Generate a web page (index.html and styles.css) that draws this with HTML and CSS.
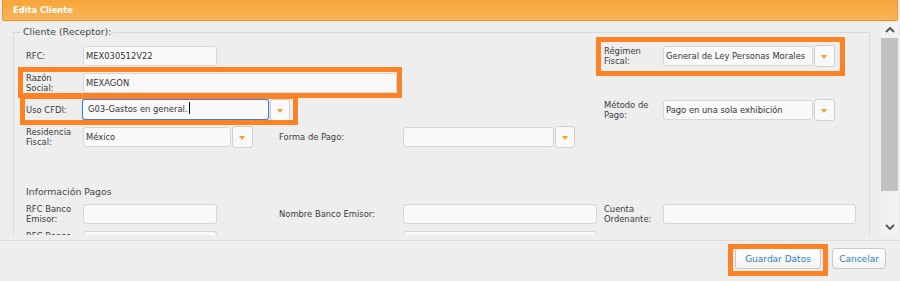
FILE: index.html
```html
<!DOCTYPE html>
<html lang="es">
<head>
  <meta charset="UTF-8">
  <meta name="viewport" content="width=device-width, initial-scale=1.0">
  <title>Edita Cliente</title>
  <link rel="stylesheet" href="styles.css">
</head>
<body>

<div class="dialog">
  <div class="dialog-title">Edita Cliente</div>

  <div class="dialog-body">
    <div class="scroll-area">
      <fieldset class="group">
        <legend>Cliente (Receptor):</legend>

        <div class="form-grid">
          <!-- fila 1 -->
          <label class="lbl c1">RFC:</label>
          <div class="field c2"><div class="input w-rfc">MEX030512V22</div></div>
          <label class="lbl c5">Régimen Fiscal:</label>
          <div class="field c6">
            <div class="combo">
              <div class="input w-regimen">General de Ley Personas Morales</div>
              <span class="drop"></span>
            </div>
          </div>

          <!-- fila 2 -->
          <label class="lbl c1">Razón Social:</label>
          <div class="field span-razon"><div class="input w-razon">MEXAGON</div></div>

          <!-- fila 3 -->
          <label class="lbl c1">Uso CFDI:</label>
          <div class="field c2">
            <div class="combo">
              <div class="input w-uso focus">G03-Gastos en general.<span class="caret"></span></div>
              <span class="drop small"></span>
            </div>
          </div>
          <label class="lbl c5">Método de Pago:</label>
          <div class="field c6">
            <div class="combo">
              <div class="input w-regimen">Pago en una sola exhibición</div>
              <span class="drop"></span>
            </div>
          </div>

          <!-- fila 4 -->
          <label class="lbl c1">Residencia Fiscal:</label>
          <div class="field c2">
            <div class="combo">
              <div class="input w-residencia">México</div>
              <span class="drop"></span>
            </div>
          </div>
          <label class="lbl c3">Forma de Pago:</label>
          <div class="field c4">
            <div class="combo">
              <div class="input w-forma"></div>
              <span class="drop small"></span>
            </div>
          </div>

          <h3 class="section-title">Información Pagos</h3>

          <!-- fila 5 -->
          <label class="lbl c1">RFC Banco Emisor:</label>
          <div class="field c2"><div class="input w-rfc"></div></div>
          <label class="lbl c3">Nombre Banco Emisor:</label>
          <div class="field c4"><div class="input w-banco"></div></div>
          <label class="lbl c5">Cuenta Ordenante:</label>
          <div class="field c6"><div class="input w-cuenta"></div></div>

          <!-- fila 6 -->
          <label class="lbl c1">RFC Banco Receptor:</label>
          <div class="field c2"><div class="input w-rfc"></div></div>
          <label class="lbl c3">Cuenta Beneficiario:</label>
          <div class="field c4"><div class="input w-banco"></div></div>
        </div>
      </fieldset>
    </div>

    <div class="scrollbar">
      <span class="sb-btn">
        <svg width="10" height="6" viewBox="0 0 10 6"><path d="M1 5 L5 1 L9 5" fill="none" stroke="#505050" stroke-width="1.8"/></svg>
      </span>
      <span class="sb-thumb"></span>
      <span class="sb-track"></span>
      <span class="sb-btn">
        <svg width="10" height="6" viewBox="0 0 10 6"><path d="M1 1 L5 5 L9 1" fill="none" stroke="#505050" stroke-width="1.8"/></svg>
      </span>
    </div>
  </div>

  <div class="dialog-footer">
    <button class="btn btn-save">Guardar Datos</button>
    <button class="btn btn-cancel">Cancelar</button>
  </div>

  <!-- marcas naranjas sobre los campos -->
  <span class="mark mark-regimen"></span>
  <span class="mark mark-razon"></span>
  <span class="mark mark-uso"></span>
  <span class="mark mark-guardar"></span>
</div>

</body>
</html>
```

FILE: styles.css
```css
/* Estilos generales */
body {
  margin: 0;
  background: #eeeeee;
  font-family: "DejaVu Sans", Verdana, sans-serif;
  font-size: 8.4px;
  color: #3a3a3a;
}

.dialog {
  position: relative;
  width: 900px;
  height: 281px;
  background: #eeeeee;
  overflow: hidden;
}

/* Barra de titulo */
.dialog-title {
  height: 20px;
  line-height: 20px;
  margin: 0 2px;
  padding-left: 10px;
  border: 1px solid #e9961f;
  border-top: none;
  border-radius: 0 0 2px 2px;
  background: linear-gradient(#f7a639, #f9b55a);
  color: #fff;
  font-weight: bold;
  font-size: 8.3px;
}

/* Cuerpo con desplazamiento */
.dialog-body {
  display: flex;
  height: 214px;
}

.scroll-area {
  width: 881px;
  overflow: hidden;
}

.group {
  margin: 5px 11px 0 13px;
  padding: 8px 13px 0 12px;
  border: 1px solid #d9d9d9;
  border-bottom: none;
  min-inline-size: 0;
}

.group legend {
  margin-left: -5px;
  padding: 0 2px;
  font-size: 9.4px;
  line-height: 12px;
  color: #444;
}

.form-grid {
  display: grid;
  grid-template-columns: 57px 196px 124px 201px 59px 193px;
  grid-template-rows: repeat(4, 20px) auto repeat(2, 20px);
  row-gap: 7px;
  align-items: center;
}

.lbl {
  line-height: 10px;
  padding-right: 3px;
}

.c1 { grid-column: 1; }
.c2 { grid-column: 2; }
.c3 { grid-column: 3; }
.c4 { grid-column: 4; }
.c5 { grid-column: 5; }
.c6 { grid-column: 6; }
.span-razon { grid-column: 2 / 5; }

.field {
  height: 20px;
}

.input {
  box-sizing: border-box;
  flex: none;
  height: 20px;
  padding: 0 2px;
  border: 1px solid #d6d6d6;
  border-radius: 3px;
  background: #f9f9f9;
  line-height: 18px;
  color: #333;
  white-space: nowrap;
  overflow: hidden;
}

.input.focus {
  height: 21px;
  margin-top: -1px;
  margin-left: -1px;
  padding-left: 5px;
  border: 1px solid #3b7fd9;
  box-shadow: 0 0 1px #3b7fd9;
  line-height: 19px;
}

.caret {
  display: inline-block;
  width: 0;
  height: 12px;
  margin-left: 1px;
  border-left: 1px solid #111;
  vertical-align: -2px;
}

.w-rfc { width: 134px; }
.w-razon { width: 314px; }
.w-regimen { width: 150px; }
.w-uso { width: 187px; }
.w-residencia { width: 148px; }
.w-forma { width: 151px; }
.w-banco { width: 194px; }
.w-cuenta { width: 193px; }

.combo {
  display: flex;
  gap: 1px;
}

.drop {
  box-sizing: border-box;
  flex: none;
  width: 21px;
  height: 22px;
  margin-top: -1px;
  border: 1px solid #d0d0d0;
  border-radius: 3px;
  background: #f9f9f9;
  position: relative;
}

.drop.small {
  width: 20px;
}

.drop::after {
  content: "";
  position: absolute;
  left: 50%;
  top: 9px;
  margin-left: -3.5px;
  border-left: 3.5px solid transparent;
  border-right: 3.5px solid transparent;
  border-top: 4px solid #f5a01e;
}

.section-title {
  grid-column: 1 / -1;
  margin: 32px 0 0;
  height: 11px;
  line-height: 11px;
  font-size: 9.3px;
  font-weight: normal;
  color: #444;
}

/* Barra de desplazamiento */
.scrollbar {
  display: flex;
  flex-direction: column;
  width: 17px;
  margin-top: 1px;
  background: #f1f1f1;
}

.sb-btn {
  display: flex;
  align-items: center;
  justify-content: center;
  height: 16px;
}

.sb-thumb {
  height: 153px;
  background: #c1c1c1;
}

.sb-track {
  flex: 1;
}

/* Pie */
.dialog-footer {
  display: flex;
  justify-content: flex-end;
  gap: 11px;
  margin-top: 5px;
  padding: 7px 14px 0 0;
  height: 33px;
  border-top: 1px solid #dcdcdc;
  border-bottom: 1px solid #dcdcdc;
}

.btn {
  height: 21px;
  border: 1px solid #c8c8c8;
  border-radius: 3px;
  background: linear-gradient(#ffffff, #f3f3f3);
  color: #2f82ba;
  font-family: "DejaVu Sans", Verdana, sans-serif;
  font-size: 9px;
  cursor: pointer;
}

.btn-save {
  width: 86px;
}

.btn-cancel {
  width: 54px;
  padding: 0;
}

/* Marcas naranjas */
.mark {
  position: absolute;
  box-sizing: border-box;
  border: 5px solid #fe8224;
  pointer-events: none;
}

.mark-regimen { left: 596px; top: 37px; width: 249px; height: 39px; }
.mark-razon { left: 18px; top: 67px; width: 384px; height: 31px; }
.mark-uso { left: 20px; top: 94px; width: 278px; height: 31px; }
.mark-guardar { left: 728px; top: 244px; width: 100px; height: 32px; }
```
